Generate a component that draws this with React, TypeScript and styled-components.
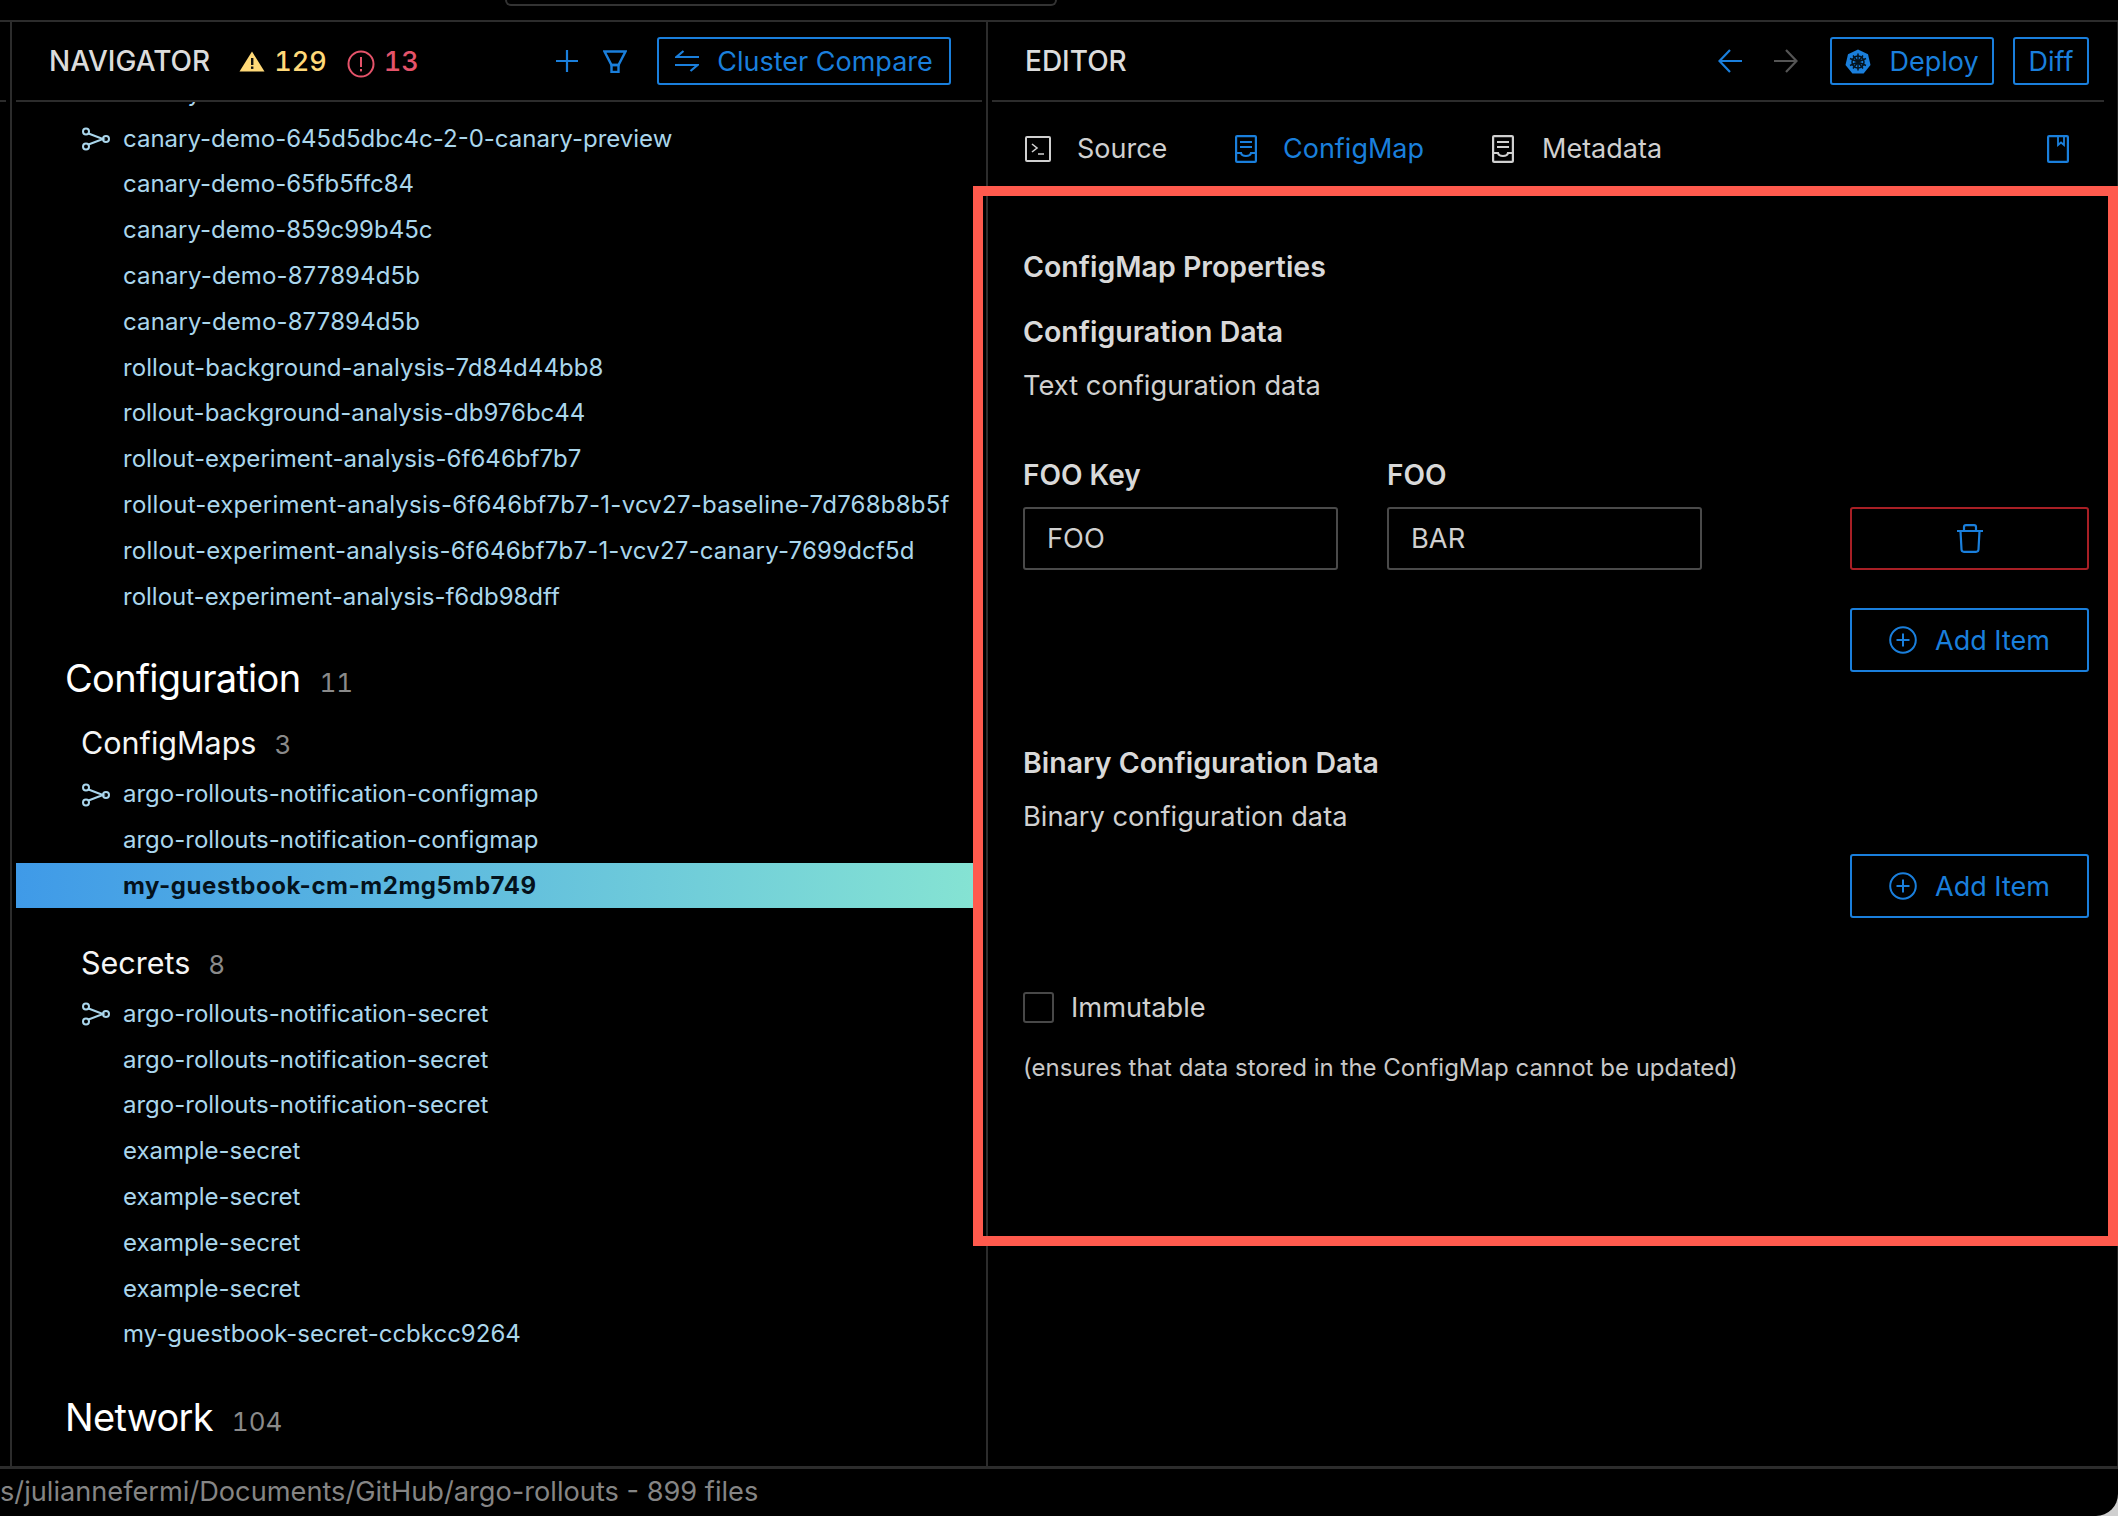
import React from 'react';
import styled, { createGlobalStyle } from 'styled-components';

const blue = '#1a7fdc';
const lineColor = '#2c2c2c';

const GlobalStyle = createGlobalStyle`
  html, body {
    margin: 0;
    padding: 0;
    background: #cfcfcf;
  }
  * {
    box-sizing: border-box;
  }
`;

const Page = styled.div`
  position: relative;
  width: 2118px;
  height: 1516px;
  display: flex;
  flex-direction: column;
  overflow: hidden;
  background: #000;
  border-bottom-right-radius: 22px;
  font-family: Inter, "Noto Sans", sans-serif;
  color: #dbdbdb;
`;

const TopBar = styled.div`
  height: 22px;
  flex: none;
  border-bottom: 2px solid ${lineColor};
`;

const TitleTab = styled.div`
  width: 552px;
  height: 6px;
  margin-left: 505px;
  border: 2px solid #333;
  border-top: 0;
  border-radius: 0 0 8px 8px;
`;

const Main = styled.div`
  flex: 1;
  display: flex;
  min-height: 0;
`;

const Rail = styled.div`
  width: 12px;
  flex: none;
  border-right: 2px solid ${lineColor};
  padding-top: 78px;

  &::before {
    content: '';
    display: block;
    width: 6px;
    height: 2px;
    background: ${lineColor};
  }
`;

const NavPane = styled.div`
  width: 976px;
  flex: none;
  display: flex;
  flex-direction: column;
  border-right: 2px solid ${lineColor};
  overflow: hidden;
`;

const EditorPane = styled.div`
  flex: 1;
  display: flex;
  flex-direction: column;
  border-right: 1px solid #222;
`;

const PaneHeader = styled.div<{ $left: number; $right: number; $inset: number }>`
  height: 80px;
  flex: none;
  display: flex;
  align-items: center;
  margin: 0 ${(p) => p.$right}px 0 4px;
  padding: 0 ${(p) => p.$inset}px 0 ${(p) => p.$left}px;
  border-bottom: 2px solid ${lineColor};
  background: #000;
  position: relative;
  z-index: 1;
`;

const PaneTitle = styled.span`
  font-size: 28px;
  font-weight: 500;
  color: #dcdcdc;
`;

const Count = styled.span<{ $color: string; $gap: number }>`
  display: inline-flex;
  align-items: center;
  font-size: 27px;
  font-weight: 500;
  font-variant-numeric: tabular-nums;
  color: ${(p) => p.$color};
  margin-left: ${(p) => p.$gap}px;

  svg {
    margin-right: 9px;
  }
`;

const HeaderActions = styled.div<{ $gap: number }>`
  margin-left: auto;
  display: flex;
  align-items: center;
  gap: ${(p) => p.$gap}px;
`;

const IconPair = styled.div`
  display: flex;
  align-items: center;
  gap: 25px;
`;

const GhostButton = styled.div<{ $width: number; $height: number }>`
  width: ${(p) => p.$width}px;
  height: ${(p) => p.$height}px;
  display: flex;
  align-items: center;
  justify-content: center;
  gap: 18px;
  border: 2px solid ${blue};
  border-radius: 3px;
  color: ${blue};
  font-size: 27px;
`;

const DiffButton = styled(GhostButton)`
  margin-left: 19px;
`;

const List = styled.div`
  flex: 1;
  min-height: 0;
  margin: -32.5px 0 0 4px;
  overflow: hidden;
`;

const Row = styled.div<{ $active?: boolean; $track?: number }>`
  height: 45.8px;
  display: flex;
  align-items: center;
  padding-left: 107px;
  margin-right: ${(p) => (p.$active ? 13 : 0)}px;
  position: relative;
  font-size: 24px;
  letter-spacing: ${(p) => p.$track ?? 0}px;
  white-space: nowrap;
  color: ${(p) => (p.$active ? '#04121c' : '#aad6ec')};
  font-weight: ${(p) => (p.$active ? 700 : 400)};
  background: ${(p) => (p.$active ? 'linear-gradient(90deg, #3f9ae8, #85e3d3)' : 'none')};
`;

const RowIcon = styled.span`
  position: absolute;
  left: 64px;
  top: 12px;
  display: flex;
`;

const SectionTitle = styled.div<{ $top: number }>`
  height: 60px;
  line-height: 60px;
  margin-top: ${(p) => p.$top}px;
  padding-left: 49px;
  display: flex;
  align-items: baseline;
  gap: 19px;
  font-size: 38px;
  letter-spacing: -0.7px;
  color: #fff;
`;

const GroupTitle = styled.div<{ $top: number; $bottom: number }>`
  height: 40px;
  line-height: 40px;
  margin: ${(p) => p.$top}px 0 ${(p) => p.$bottom}px;
  padding-left: 65px;
  display: flex;
  align-items: baseline;
  gap: 18px;
  font-size: 30.5px;
  color: #f5f5f5;
`;

const Amount = styled.span`
  font-size: 26px;
  font-variant-numeric: tabular-nums;
  letter-spacing: 0;
  color: #8a8a8a;
`;

const TabBar = styled.div`
  height: 90px;
  flex: none;
  display: flex;
  align-items: center;
  padding: 3px 48px 0 37px;
`;

const Tab = styled.div<{ $active?: boolean; $gap: number; $width: number }>`
  width: ${(p) => p.$width}px;
  display: flex;
  align-items: center;
  gap: ${(p) => p.$gap}px;
  font-size: 27px;
  color: ${(p) => (p.$active ? blue : '#d0d0d0')};
`;

const BookmarkSlot = styled.div`
  margin-left: auto;
  display: flex;
`;

const Form = styled.div`
  padding: 57px 28px 0 35px;
  display: flex;
  flex-direction: column;
  font-size: 27.25px;
  color: #d0d0d0;
`;

const Heading = styled.div<{ $top: number }>`
  height: 36px;
  line-height: 36px;
  margin-top: ${(p) => p.$top}px;
  font-size: 28.5px;
  font-weight: 600;
  color: #d9d9d9;
`;

const Body = styled.div<{ $top: number }>`
  height: 36px;
  line-height: 36px;
  margin-top: ${(p) => p.$top}px;
`;

const FieldGrid = styled.div`
  margin-top: 53px;
  display: grid;
  grid-template-columns: 315px 315px 1fr;
  column-gap: 49px;
  row-gap: 14px;
  grid-template-rows: 36px 63px;
`;

const FieldLabel = styled.div`
  line-height: 36px;
  font-size: 28px;
  font-weight: 600;
  color: #d9d9d9;
`;

const Field = styled.div`
  height: 63px;
  display: flex;
  align-items: center;
  padding-left: 22px;
  border: 2px solid #4a4a4a;
  border-radius: 3px;
`;

const DeleteButton = styled.div`
  grid-column: 3;
  justify-self: end;
  width: 239px;
  height: 63px;
  display: flex;
  align-items: center;
  justify-content: center;
  border: 2.5px solid #a81f25;
  border-radius: 3px;
`;

const AddRow = styled.div<{ $top: number }>`
  margin-top: ${(p) => p.$top}px;
  display: flex;
  justify-content: flex-end;
`;

const CheckRow = styled.div`
  margin-top: 73px;
  height: 32px;
  display: flex;
  align-items: center;
  gap: 17px;
`;

const CheckBox = styled.span`
  width: 31px;
  height: 31px;
  border: 2px solid #484848;
  border-radius: 3px;
`;

const Note = styled.div`
  margin-top: 27px;
  height: 36px;
  line-height: 36px;
  font-size: 24px;
  color: #c8c8c8;
`;

const StatusBar = styled.div`
  height: 50px;
  flex: none;
  border-top: 3px solid ${lineColor};
  padding-bottom: 2px;
  display: flex;
  align-items: center;
  font-size: 27.2px;
  color: #858585;
  white-space: nowrap;
`;

const Highlight = styled.div`
  position: absolute;
  left: 973px;
  top: 186px;
  width: 1145px;
  height: 1060px;
  border: 10px solid #ff5a4d;
  pointer-events: none;
`;

const ErrorSvg = styled.svg`
  margin-top: 6px;
`;

const WarnIcon = () => (
  <svg width="26" height="21" viewBox="0 0 26 21">
    <path d="M13 0.5 L25.5 20.5 H0.5 Z" fill="#ffd978" />
    <rect x="12" y="7" width="2.4" height="7" fill="#111" />
    <rect x="12" y="15.5" width="2.4" height="2.4" fill="#111" />
  </svg>
);

const ErrorIcon = () => (
  <ErrorSvg width="28" height="28" viewBox="0 0 28 28">
    <circle cx="14" cy="14" r="12.5" fill="none" stroke="#e5536a" strokeWidth="2" />
    <rect x="13" y="7" width="2" height="10" fill="#e5536a" />
    <rect x="13" y="19" width="2" height="2.4" fill="#e5536a" />
  </ErrorSvg>
);

const PlusIcon = () => (
  <svg width="22" height="22" viewBox="0 0 22 22" stroke={blue} strokeWidth="2.2">
    <path d="M11 0 V22 M0 11 H22" />
  </svg>
);

const FunnelIcon = () => (
  <svg width="24" height="23" viewBox="0 0 24 23" fill="none" stroke={blue} strokeWidth="2.4">
    <path d="M1.5 1.5 H22.5 L15.5 15 H8.5 Z" />
    <rect x="8.5" y="15" width="7" height="7" />
  </svg>
);

const SwapIcon = () => (
  <svg width="24" height="22" viewBox="0 0 24 22" fill="none" stroke={blue} strokeWidth="2.2">
    <path d="M24 7 H1.5 L8.5 1 M0 15 H22.5 L15.5 21" />
  </svg>
);

const KubeIcon = () => (
  <svg width="26" height="25" viewBox="0 0 26 25">
    <path d="M13 0.5 L23 5.3 L25.5 16 L18.6 24.5 H7.4 L0.5 16 L3 5.3 Z" fill={blue} />
    <g fill="none" stroke="#04121c" strokeWidth="1.5">
      <circle cx="13" cy="13" r="6" />
      <path d="M13 4.5 V21.5 M5 9.5 L21 16.5 M21 9.5 L5 16.5 M8 19.5 L18 6.5 M18 19.5 L8 6.5" />
    </g>
  </svg>
);

const BackArrow = styled.svg<{ $flip?: boolean }>`
  transform: ${(p) => (p.$flip ? 'scaleX(-1)' : 'none')};
`;

const ArrowIcon = ({ color, flip }: { color: string; flip?: boolean }) => (
  <BackArrow $flip={flip} width="24" height="24" viewBox="0 0 24 24" fill="none" stroke={color} strokeWidth="2.2">
    <path d="M24 12 H2 M12 1 L1.5 12 L12 23" />
  </BackArrow>
);

const BranchIcon = () => (
  <svg width="30" height="24" viewBox="0 0 30 24" fill="none" stroke="#aad6ec" strokeWidth="2">
    <circle cx="6" cy="4.5" r="3" />
    <circle cx="6" cy="19.5" r="3" />
    <circle cx="26" cy="12" r="3" />
    <path d="M8.5 6.5 L23 12 L8.5 17.5" />
  </svg>
);

const TerminalIcon = () => (
  <svg width="26" height="26" viewBox="0 0 26 26" fill="none" stroke="#d0d0d0" strokeWidth="2">
    <rect x="1" y="1" width="24" height="24" rx="1" />
    <path d="M7 8 L12 12 L7 16 M13 18 H19" strokeWidth="1.6" />
  </svg>
);

const DocIcon = ({ color }: { color: string }) => (
  <svg width="22" height="28" viewBox="0 0 22 28" fill="none" stroke={color} strokeWidth="2.2">
    <rect x="1.1" y="1.1" width="19.8" height="25.8" rx="1" />
    <path d="M5 7 H17 M5 12 H17 M1 18 H6 C7 22 15 22 16 18 H21" />
  </svg>
);

const BookIcon = () => (
  <svg width="22" height="28" viewBox="0 0 22 28" fill="none" stroke={blue} strokeWidth="2.2">
    <rect x="1.1" y="1.1" width="19.8" height="25.8" rx="1" />
    <path d="M11 1 V10 L14 7.5 L17 10 V1" strokeWidth="1.8" />
  </svg>
);

const TrashIcon = () => (
  <svg width="28" height="29" viewBox="0 0 28 29" fill="none" stroke={blue} strokeWidth="2.2">
    <path d="M1 7 H27 M8 7 V3 Q8 1.2 10 1.2 H18 Q20 1.2 20 3 V7" />
    <path d="M4.5 7 L5.5 25.5 Q5.7 27.8 8 27.8 H20 Q22.3 27.8 22.5 25.5 L23.5 7" />
  </svg>
);

const AddCircleIcon = () => (
  <svg width="28" height="28" viewBox="0 0 28 28" fill="none" stroke={blue} strokeWidth="2">
    <circle cx="14" cy="14" r="12.8" />
    <path d="M14 7.5 V20.5 M7.5 14 H20.5" />
  </svg>
);

const AddItem = () => (
  <GhostButton $width={239} $height={64}>
    <AddCircleIcon />
    <span>Add Item</span>
  </GhostButton>
);

type ListRow = { name: string; branch?: boolean; active?: boolean; track?: number };

const workloads: ListRow[] = [
  { name: 'canary-demo-645d5dbc4c' },
  { name: 'canary-demo-645d5dbc4c-2-0-canary-preview', branch: true },
  { name: 'canary-demo-65fb5ffc84' },
  { name: 'canary-demo-859c99b45c' },
  { name: 'canary-demo-877894d5b', track: 0.12 },
  { name: 'canary-demo-877894d5b', track: 0.12 },
  { name: 'rollout-background-analysis-7d84d44bb8', track: 0.07 },
  { name: 'rollout-background-analysis-db976bc44' },
  { name: 'rollout-experiment-analysis-6f646bf7b7', track: 0.04 },
  { name: 'rollout-experiment-analysis-6f646bf7b7-1-vcv27-baseline-7d768b8b5f', track: 0.24 },
  { name: 'rollout-experiment-analysis-6f646bf7b7-1-vcv27-canary-7699dcf5d', track: 0.19 },
  { name: 'rollout-experiment-analysis-f6db98dff' },
];

const configMaps: ListRow[] = [
  { name: 'argo-rollouts-notification-configmap', branch: true },
  { name: 'argo-rollouts-notification-configmap' },
  { name: 'my-guestbook-cm-m2mg5mb749', active: true, track: 0.55 },
];

const secrets: ListRow[] = [
  { name: 'argo-rollouts-notification-secret', branch: true },
  { name: 'argo-rollouts-notification-secret' },
  { name: 'argo-rollouts-notification-secret' },
  { name: 'example-secret' },
  { name: 'example-secret' },
  { name: 'example-secret' },
  { name: 'example-secret' },
  { name: 'my-guestbook-secret-ccbkcc9264' },
];

const Rows = ({ items }: { items: ListRow[] }) => (
  <>
    {items.map(({ name, branch, active, track }, i) => (
      <Row key={i} $active={active} $track={track}>
        {branch && (
          <RowIcon>
            <BranchIcon />
          </RowIcon>
        )}
        {name}
      </Row>
    ))}
  </>
);

const App = () => {
  return (
    <Page>
      <GlobalStyle />
      <TopBar>
        <TitleTab />
      </TopBar>
      <Main>
        <Rail />
        <NavPane>
          <PaneHeader $left={33} $right={4} $inset={31}>
            <PaneTitle>NAVIGATOR</PaneTitle>
            <Count $color="#ffd978" $gap={29}>
              <WarnIcon />
              129
            </Count>
            <Count $color="#e5536a" $gap={20}>
              <ErrorIcon />
              13
            </Count>
            <HeaderActions $gap={30}>
              <IconPair>
                <PlusIcon />
                <FunnelIcon />
              </IconPair>
              <GhostButton $width={294} $height={48}>
                <SwapIcon />
                <span>Cluster Compare</span>
              </GhostButton>
            </HeaderActions>
          </PaneHeader>
          <List>
            <Rows items={workloads} />
            <SectionTitle $top={29}>
              Configuration <Amount>11</Amount>
            </SectionTitle>
            <GroupTitle $top={15} $bottom={8}>
              ConfigMaps <Amount>3</Amount>
            </GroupTitle>
            <Rows items={configMaps} />
            <GroupTitle $top={35} $bottom={7}>
              Secrets <Amount>8</Amount>
            </GroupTitle>
            <Rows items={secrets} />
            <SectionTitle $top={30}>
              Network <Amount>104</Amount>
            </SectionTitle>
          </List>
        </NavPane>
        <EditorPane>
          <PaneHeader $left={33} $right={13} $inset={15}>
            <PaneTitle>EDITOR</PaneTitle>
            <HeaderActions $gap={32}>
              <ArrowIcon color={blue} />
              <ArrowIcon color="#555" flip />
              <GhostButton $width={164} $height={48}>
                <KubeIcon />
                <span>Deploy</span>
              </GhostButton>
            </HeaderActions>
            <DiffButton $width={76} $height={48}>
              Diff
            </DiffButton>
          </PaneHeader>
          <TabBar>
            <Tab $gap={26} $width={210}>
              <TerminalIcon />
              Source
            </Tab>
            <Tab $active $gap={26} $width={257}>
              <DocIcon color={blue} />
              ConfigMap
            </Tab>
            <Tab $gap={28} $width={210}>
              <DocIcon color="#d0d0d0" />
              Metadata
            </Tab>
            <BookmarkSlot>
              <BookIcon />
            </BookmarkSlot>
          </TabBar>
          <Form>
            <Heading $top={0}>ConfigMap Properties</Heading>
            <Heading $top={29}>Configuration Data</Heading>
            <Body $top={18}>Text configuration data</Body>
            <FieldGrid>
              <FieldLabel>FOO Key</FieldLabel>
              <FieldLabel>FOO</FieldLabel>
              <span />
              <Field>FOO</Field>
              <Field>BAR</Field>
              <DeleteButton>
                <TrashIcon />
              </DeleteButton>
            </FieldGrid>
            <AddRow $top={38}>
              <AddItem />
            </AddRow>
            <Heading $top={73}>Binary Configuration Data</Heading>
            <Body $top={18}>Binary configuration data</Body>
            <AddRow $top={19}>
              <AddItem />
            </AddRow>
            <CheckRow>
              <CheckBox />
              Immutable
            </CheckRow>
            <Note>(ensures that data stored in the ConfigMap cannot be updated)</Note>
          </Form>
        </EditorPane>
      </Main>
      <StatusBar>s/juliannefermi/Documents/GitHub/argo-rollouts - 899 files</StatusBar>
      <Highlight />
    </Page>
  );
};

export default App;
